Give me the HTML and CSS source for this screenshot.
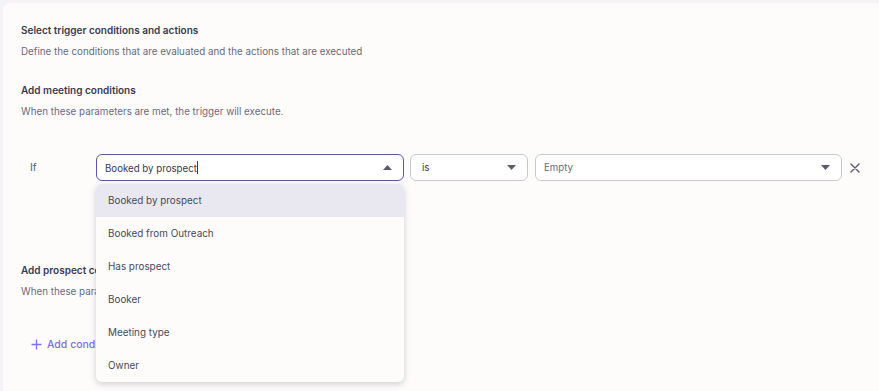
FILE: index.html
```html
<!DOCTYPE html>
<html lang="en">
<head>
    <meta charset="UTF-8">
    <meta name="viewport" content="width=device-width, initial-scale=1.0">
    <title>Trigger conditions</title>
    <link rel="stylesheet" href="styles.css">
</head>
<body>
    <div class="card">
        <div class="section">
            <div class="title">Select trigger conditions and actions</div>
            <div class="desc">Define the conditions that are evaluated and the actions that are executed</div>
        </div>

        <div class="section section-gap">
            <div class="title">Add meeting conditions</div>
            <div class="desc">When these parameters are met, the trigger will execute.</div>
        </div>

        <div class="condition-row">
            <div class="cond-label">If</div>
            <div class="field-wrap">
                <div class="field field-focus">
                    <span class="field-text">Booked by prospect<span class="caret"></span></span>
                    <svg class="arrow" width="9" height="5" viewBox="0 0 9 5"><path d="M0 5 L4.5 0 L9 5 Z" fill="#5c5b70"/></svg>
                </div>
                <ul class="menu">
                    <li class="menu-item active">Booked by prospect</li>
                    <li class="menu-item">Booked from Outreach</li>
                    <li class="menu-item">Has prospect</li>
                    <li class="menu-item">Booker</li>
                    <li class="menu-item">Meeting type</li>
                    <li class="menu-item">Owner</li>
                </ul>
            </div>
            <div class="field field-small">
                <span class="field-text">is</span>
                <svg class="arrow" width="9" height="5" viewBox="0 0 9 5"><path d="M0 0 L4.5 5 L9 0 Z" fill="#5c5b70"/></svg>
            </div>
            <div class="field field-wide">
                <span class="field-text placeholder">Empty</span>
                <svg class="arrow" width="9" height="5" viewBox="0 0 9 5"><path d="M0 0 L4.5 5 L9 0 Z" fill="#5c5b70"/></svg>
            </div>
            <button class="remove-btn">
                <svg width="10" height="10" viewBox="0 0 10 10"><path d="M1 1 L9 9 M9 1 L1 9" stroke="#5c5b70" stroke-width="1.4" stroke-linecap="round"/></svg>
            </button>
        </div>

        <div class="section prospect">
            <div class="title">Add prospect conditions</div>
            <div class="desc">When these parameters are met, the trigger will execute.</div>
        </div>

        <button class="add-btn">
            <svg width="11" height="11" viewBox="0 0 11 11"><path d="M5.5 0.5 V10.5 M0.5 5.5 H10.5" stroke="#7c6ff2" stroke-width="1.3"/></svg>
            <span>Add condition</span>
        </button>
    </div>
</body>
</html>
```

FILE: styles.css
```css
body{
    margin: 0;
    padding: 3px 0 0 3px;
    background-color: #f4f4f8;
    font-family: Inter, "Noto Sans", sans-serif;
    overflow: hidden;
    height: 388px;
}
.card{
    background-color: #fdfcfb;
    border-radius: 8px 0 0 0;
    padding: 19px 18px 17px;
    margin-right: -20px;
    height: 352px;
}
.title{
    font-size: 10px;
    font-weight: 600;
    line-height: 16px;
    color: #3a3950;
}
.desc{
    font-size: 9.8px;
    line-height: 16px;
    margin-top: 6px;
    color: #6b6a7e;
}
.section-gap{
    margin-top: 22px;
}
.condition-row{
    display: flex;
    align-items: center;
    margin-top: 34px;
    height: 27px;
}
.cond-label{
    width: 66px;
    padding-left: 9px;
    font-size: 10.5px;
    color: #5c5b70;
}
.field-wrap{
    position: relative;
}
.field{
    box-sizing: border-box;
    height: 27px;
    border: 1px solid #c9c8d0;
    border-radius: 6px;
    background-color: #fff;
    display: flex;
    align-items: center;
    justify-content: space-between;
    padding: 0 11px 0 8px;
    font-size: 9.7px;
    color: #3a3950;
}
.field-focus{
    width: 308px;
    border-color: #5a57a6;
}
.field-small{
    width: 118px;
    margin-left: 6px;
    padding-left: 11px;
}
.field-wide{
    width: 307px;
    margin-left: 7px;
    padding-left: 8px;
}
.placeholder{
    color: #6b6a7e;
}
.caret{
    display: inline-block;
    width: 1px;
    height: 13px;
    background-color: #3a3950;
    vertical-align: -2px;
}
.arrow{
    display: block;
}
.menu{
    position: absolute;
    top: 30px;
    left: 0;
    width: 308px;
    margin: 0;
    padding: 0;
    list-style: none;
    background-color: #fdfcfb;
    border-radius: 6px;
    box-shadow: 0 2px 6px rgba(40, 40, 70, 0.22);
    overflow: hidden;
    z-index: 5;
}
.menu-item{
    height: 33px;
    line-height: 33px;
    padding-left: 12px;
    font-size: 9.9px;
    color: #4a495e;
}
.menu-item.active{
    background-color: #e9e8f1;
}
.remove-btn{
    border: none;
    background: none;
    padding: 0;
    margin-left: 8px;
    display: flex;
    cursor: pointer;
}
.prospect{
    margin-top: 81px;
}
.add-btn{
    display: flex;
    align-items: center;
    gap: 5px;
    margin: 38px 0 0 10px;
    padding: 0;
    border: none;
    background: none;
    font-family: inherit;
    font-size: 10.5px;
    font-weight: 500;
    color: #7c6ff2;
    cursor: pointer;
}
```
